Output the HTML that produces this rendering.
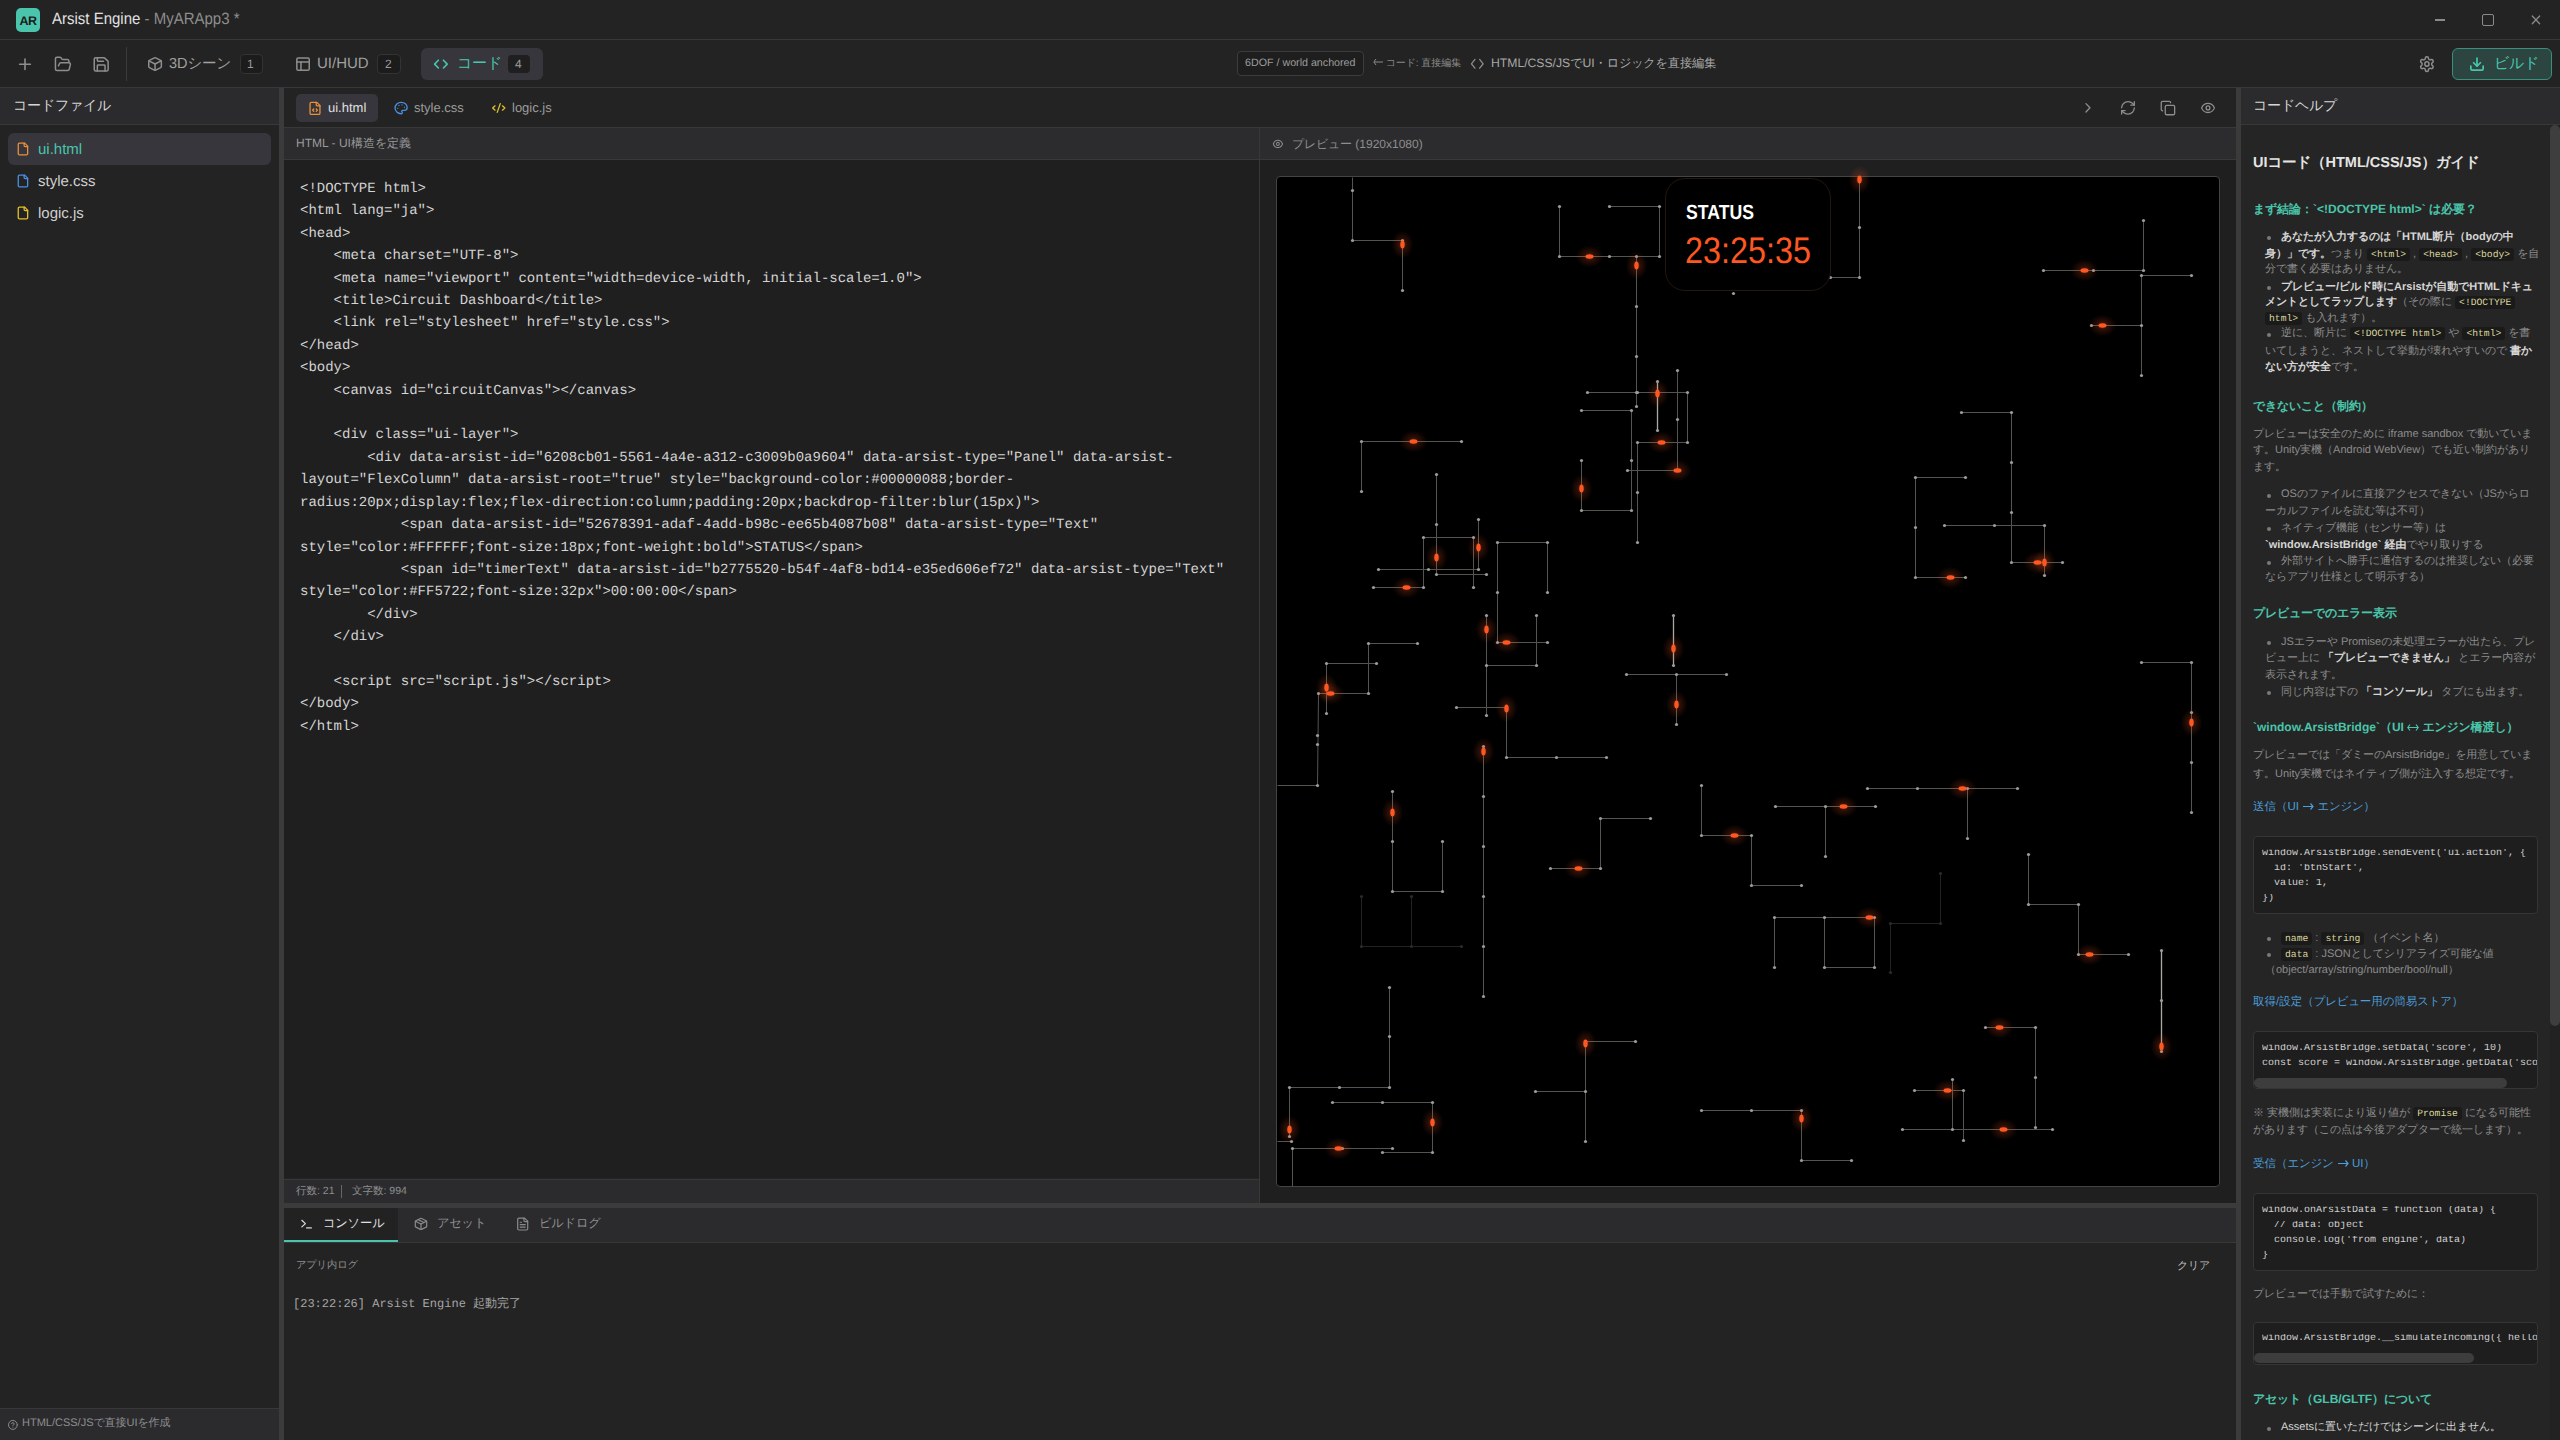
<!DOCTYPE html>
<html lang="ja">
<head>
<meta charset="UTF-8">
<style>
*{box-sizing:border-box;margin:0;padding:0}
html,body{text-rendering:geometricPrecision;width:2560px;height:1440px;overflow:hidden;background:#232323;font-family:"Liberation Sans",sans-serif;color:#ddd}
.a{position:absolute}
.t{position:absolute;white-space:pre;line-height:1}
svg{position:absolute;overflow:visible}
i{display:inline-block;width:1em;font-style:normal}
.mono{font-family:"Liberation Mono",monospace}
.ic{font-family:"Liberation Mono",monospace;font-size:9.7px;color:#d9d49c;background:#1a1a1a;border-radius:3px;padding:1px 4px}
</style>
</head>
<body>
<!-- TITLE BAR -->
<div class="a" style="left:0;top:0;width:2560px;height:39px;background:#232323"></div>
<div class="a" style="left:0;top:39px;width:2560px;height:1px;background:#383838"></div>
<div class="a" style="left:16px;top:8px;width:24px;height:24px;border-radius:5px;background:#4ac5ab"></div>
<div class="t" style="left:19.5px;top:14.5px;font-size:12.5px;font-weight:bold;color:#1b1b1b;letter-spacing:-0.5px">AR</div>
<div class="t" style="left:52px;top:11.2px;font-size:16.4px;color:#e2e2e2;transform:scaleX(.915);transform-origin:0 0">Arsist Engine<span style="color:#8d8d8d"> - MyARApp3 *</span></div>
<div class="a" style="left:2435px;top:19px;width:10px;height:2px;background:#8a8a8a"></div>
<div class="a" style="left:2482px;top:14px;width:12px;height:12px;border:1.5px solid #8a8a8a;border-radius:2px"></div>

<!-- TOOLBAR -->
<div class="a" style="left:0;top:87px;width:2560px;height:1px;background:#383838"></div>
<div class="a" style="left:126px;top:47px;width:1px;height:34px;background:#3a3a3a"></div>
<div class="t" style="left:169px;top:56.5px;font-size:14.5px;color:#a0a0a0">3D<i>シ</i><i>ー</i><i>ン</i></div>
<div class="a" style="left:240px;top:54px;width:23px;height:20px;border:1px solid #333;border-radius:4px;background:#1c1c1c"></div>
<div class="t" style="left:247px;top:58px;font-size:12px;color:#9a9a9a">1</div>
<div class="t" style="left:317px;top:56px;font-size:15px;color:#a0a0a0">UI/HUD</div>
<div class="a" style="left:377px;top:54px;width:24px;height:20px;border:1px solid #333;border-radius:4px;background:#1c1c1c"></div>
<div class="t" style="left:385px;top:58px;font-size:12px;color:#9a9a9a">2</div>
<div class="a" style="left:421px;top:48px;width:122px;height:32px;border-radius:6px;background:#37363c"></div>
<div class="t" style="left:457px;top:56px;font-size:15px;color:#4ac5ab"><i>コ</i><i>ー</i><i>ド</i></div>
<div class="a" style="left:508px;top:55px;width:22px;height:18px;border-radius:4px;background:#1f1f1f"></div>
<div class="t" style="left:515px;top:58px;font-size:12px;color:#9a9a9a">4</div>

<div class="a" style="left:1237px;top:51px;width:127px;height:25px;border:1px solid #3c3c3c;border-radius:4px;background:#1e1e1e"></div>
<div class="t" style="left:1245px;top:58px;font-size:10.7px;color:#9c9c9c">6DOF / world anchored</div>
<div class="t" style="left:1373px;top:58px;font-size:10px;color:#8a8a8a"><svg style="position:static;display:inline-block;vertical-align:0" width="10" height="8" viewBox="0 0 10 8"><path d="M3 1L.8 4 3 7M1 4h9" fill="none" stroke="#8a8a8a" stroke-width="1"/></svg> <i>コ</i><i>ー</i><i>ド</i>: <i>直</i><i>接</i><i>編</i><i>集</i></div>
<div class="t" style="left:1491px;top:57px;font-size:12.2px;color:#a8a8a8">HTML/CSS/JS<i>で</i>UI<i>・</i><i>ロ</i><i>ジ</i><i>ッ</i><i>ク</i><i>を</i><i>直</i><i>接</i><i>編</i><i>集</i></div>

<div class="a" style="left:2452px;top:48px;width:100px;height:32px;border:1px solid #3a8f7e;border-radius:6px;background:#2c4541"></div>
<div class="t" style="left:2494px;top:56px;font-size:15px;color:#4ac5ab"><i>ビ</i><i>ル</i><i>ド</i></div>

<!-- SIDEBAR -->
<div class="a" style="left:0;top:88px;width:279px;height:36px;background:#2b2b2e"></div>
<div class="a" style="left:0;top:124px;width:279px;height:1px;background:#383838"></div>
<div class="t" style="left:13px;top:97.5px;font-size:14px;color:#d6d6d6"><i>コ</i><i>ー</i><i>ド</i><i>フ</i><i>ァ</i><i>イ</i><i>ル</i></div>
<div class="a" style="left:8px;top:133px;width:263px;height:32px;border-radius:6px;background:#37363c"></div>
<div class="t" style="left:38px;top:142px;font-size:15px;color:#4ac5ab">ui.html</div>
<div class="t" style="left:38px;top:174px;font-size:15px;color:#cfcfcf">style.css</div>
<div class="t" style="left:38px;top:206px;font-size:15px;color:#cfcfcf">logic.js</div>
<div class="a" style="left:0;top:1408px;width:279px;height:1px;background:#383838"></div>
<div class="a" style="left:0;top:1409px;width:279px;height:31px;background:#2b2b2e"></div>
<div class="t" style="left:22px;top:1418px;font-size:11px;color:#8e8e8e">HTML/CSS/JS<i>で</i><i>直</i><i>接</i>UI<i>を</i><i>作</i><i>成</i></div>

<!-- SPLITTERS -->
<div class="a" style="left:279px;top:88px;width:5px;height:1352px;background:#3b3b3b"></div>
<div class="a" style="left:2236px;top:88px;width:5px;height:1352px;background:#3b3b3b"></div>
<div class="a" style="left:284px;top:1203px;width:1952px;height:5px;background:#3b3b3b"></div>

<!-- EDITOR TABS -->
<div class="a" style="left:284px;top:127px;width:1952px;height:1px;background:#383838"></div>
<div class="a" style="left:296px;top:94px;width:82px;height:28px;border-radius:5px;background:#37363c"></div>
<div class="t" style="left:328px;top:101px;font-size:13px;color:#e0e0e0">ui.html</div>
<div class="t" style="left:414px;top:101px;font-size:13px;color:#9c9c9c">style.css</div>
<div class="t" style="left:512px;top:101px;font-size:13px;color:#9c9c9c">logic.js</div>

<!-- EDITOR HEADER + CODE -->
<div class="a" style="left:284px;top:128px;width:975px;height:31px;background:#2c2c2f"></div>
<div class="a" style="left:284px;top:159px;width:975px;height:1px;background:#383838"></div>
<div class="t" style="left:296px;top:137px;font-size:12px;color:#9a9a9a">HTML - UI<i>構</i><i>造</i><i>を</i><i>定</i><i>義</i></div>
<div class="a" style="left:284px;top:160px;width:975px;height:1018px;background:#1f1f1f"></div>
<pre id="code" class="a mono" style="left:300px;top:178px;font-size:14px;line-height:22.4px;color:#d4d4d4">&lt;!DOCTYPE html&gt;
&lt;html lang="ja"&gt;
&lt;head&gt;
    &lt;meta charset="UTF-8"&gt;
    &lt;meta name="viewport" content="width=device-width, initial-scale=1.0"&gt;
    &lt;title&gt;Circuit Dashboard&lt;/title&gt;
    &lt;link rel="stylesheet" href="style.css"&gt;
&lt;/head&gt;
&lt;body&gt;
    &lt;canvas id="circuitCanvas"&gt;&lt;/canvas&gt;

    &lt;div class="ui-layer"&gt;
        &lt;div data-arsist-id="6208cb01-5561-4a4e-a312-c3009b0a9604" data-arsist-type="Panel" data-arsist-
layout="FlexColumn" data-arsist-root="true" style="background-color:#00000088;border-
radius:20px;display:flex;flex-direction:column;padding:20px;backdrop-filter:blur(15px)"&gt;
            &lt;span data-arsist-id="52678391-adaf-4add-b98c-ee65b4087b08" data-arsist-type="Text"
style="color:#FFFFFF;font-size:18px;font-weight:bold"&gt;STATUS&lt;/span&gt;
            &lt;span id="timerText" data-arsist-id="b2775520-b54f-4af8-bd14-e35ed606ef72" data-arsist-type="Text"
style="color:#FF5722;font-size:32px"&gt;00:00:00&lt;/span&gt;
        &lt;/div&gt;
    &lt;/div&gt;

    &lt;script src="script.js"&gt;&lt;/script&gt;
&lt;/body&gt;
&lt;/html&gt;</pre>
<div class="a" style="left:284px;top:1179px;width:975px;height:1px;background:#383838"></div>
<div class="a" style="left:284px;top:1180px;width:975px;height:23px;background:#2b2b2e"></div>
<div class="t" style="left:296px;top:1186px;font-size:10.5px;color:#8e8e8e"><i>行</i><i>数</i>: 21</div>
<div class="a" style="left:341px;top:1185px;width:1px;height:13px;background:#666"></div>
<div class="t" style="left:352px;top:1186px;font-size:10.5px;color:#8e8e8e"><i>文</i><i>字</i><i>数</i>: 994</div>
<div class="a" style="left:1259px;top:128px;width:1px;height:1075px;background:#383838"></div>

<!-- PREVIEW -->
<div class="a" style="left:1260px;top:128px;width:976px;height:31px;background:#2c2c2f"></div>
<div class="a" style="left:1260px;top:159px;width:976px;height:1px;background:#383838"></div>
<div class="t" style="left:1292px;top:137.7px;font-size:12px;color:#8e8e8e"><i>プ</i><i>レ</i><i>ビ</i><i>ュ</i><i>ー</i> (1920x1080)</div>
<div class="a" style="left:1260px;top:160px;width:976px;height:1043px;background:#1f1f1f"></div>
<div id="pv" class="a" style="left:1276px;top:176px;width:944px;height:1011px;border:1px solid #444;border-radius:4px;background:#000;overflow:hidden"></div>
<svg class="a" style="left:1276px;top:176px" width="944" height="1011" viewBox="0 0 944 1011">
<defs><radialGradient id="gl"><stop offset="0" stop-color="#ff5722" stop-opacity=".45"/><stop offset=".35" stop-color="#ff5722" stop-opacity=".18"/><stop offset="1" stop-color="#ff5722" stop-opacity="0"/></radialGradient></defs>
<path d="M664.5 697.5L664.5 747.5L614.5 747.5L614.5 796.5M85.5 720.5L85.5 770.5L185.5 770.5M135.5 720.5L135.5 770.5" stroke="#222220" stroke-width="1" fill="none"/>
<path d="M76.5 1.5L76.5 64.5L126.5 64.5L126.5 114.5M283.5 30.5L283.5 80.5L383.5 80.5M333.5 30.5L383.5 30.5L383.5 80.5M360.5 80.5L360.5 230.5M311.5 216.5L411.5 216.5M401.5 194.5L401.5 294.5L351.5 294.5M411.5 216.5L411.5 266.5L361.5 266.5M305.5 234.5L355.5 234.5L355.5 334.5L305.5 334.5L305.5 284.5M361.5 266.5L361.5 366.5M583.5 1.5L583.5 101.5L554.5 101.5M767.5 94.5L867.5 94.5L867.5 44.5M915.5 99.5L865.5 99.5L865.5 199.5M815.5 149.5L865.5 149.5M685.5 236.5L735.5 236.5L735.5 386.5M185.5 265.5L85.5 265.5L85.5 315.5M160.5 298.5L160.5 398.5L210.5 398.5M147.5 411.5L147.5 361.5L197.5 361.5L197.5 411.5M202.5 343.5L202.5 393.5L102.5 393.5M97.5 411.5L147.5 411.5M271.5 416.5L271.5 366.5L221.5 366.5L221.5 466.5L271.5 466.5M210.5 439.5L210.5 539.5M210.5 489.5L260.5 489.5L260.5 439.5M141.5 467.5L92.5 467.5L92.5 517.5L42.5 517.5M100.5 487.5L50.5 487.5L50.5 537.5M350.5 498.5L450.5 498.5M400.5 498.5L400.5 548.5M689.5 301.5L639.5 301.5L639.5 401.5L689.5 401.5M668.5 349.5L768.5 349.5L768.5 399.5M735.5 386.5L786.5 386.5M865.5 486.5L915.5 486.5L915.5 636.5M42.5 517.5L41.5 609.5L1.5 609.5M180.5 531.5L230.5 531.5L230.5 581.5L330.5 581.5M207.5 570.5L207.5 820.5M116.5 615.5L116.5 715.5L166.5 715.5L166.5 665.5M374.5 642.5L324.5 642.5L324.5 692.5L274.5 692.5M425.5 609.5L425.5 659.5L475.5 659.5L475.5 709.5L525.5 709.5M591.5 612.5L741.5 612.5M691.5 612.5L691.5 662.5M499.5 630.5L599.5 630.5M549.5 630.5L549.5 680.5M752.5 678.5L752.5 728.5L802.5 728.5L802.5 778.5L852.5 778.5M498.5 791.5L498.5 741.5L598.5 741.5L598.5 791.5L548.5 791.5L548.5 741.5M113.5 811.5L113.5 911.5L13.5 911.5L13.5 960.5M56.5 926.5L156.5 926.5L156.5 976.5L106.5 976.5M116.5 972.5L16.5 972.5L16.5 1010.5M1.5 965.5L15.5 965.5M359.5 865.5L309.5 865.5L309.5 965.5M259.5 915.5L309.5 915.5M425.5 934.5L525.5 934.5L525.5 984.5L575.5 984.5M709.5 851.5L759.5 851.5L759.5 951.5M626.5 953.5L776.5 953.5M676.5 903.5L676.5 953.5M638.5 914.5L687.5 914.5L687.5 964.5" stroke="#55554f" stroke-width="1" fill="none"/>
<path d="M381.5 205.5L381.5 254.5M397.5 439.5L397.5 489.5M885.5 774.5L885.5 875.5" stroke="#a8a8a4" stroke-width="1.3" fill="none"/>
<g fill="#2a2a2a"><circle cx="85.5" cy="720.5" r="1.6"/><circle cx="85.5" cy="770.5" r="1.6"/><circle cx="135.5" cy="720.5" r="1.6"/><circle cx="135.5" cy="770.5" r="1.6"/><circle cx="185.5" cy="770.5" r="1.6"/><circle cx="614.5" cy="747.5" r="1.6"/><circle cx="614.5" cy="796.5" r="1.6"/><circle cx="664.5" cy="697.5" r="1.6"/><circle cx="664.5" cy="747.5" r="1.6"/></g>
<g fill="#9c9c9c"><circle cx="13.5" cy="911.5" r="1.6"/><circle cx="13.5" cy="960.5" r="1.6"/><circle cx="15.5" cy="965.5" r="1.6"/><circle cx="16.5" cy="972.5" r="1.6"/><circle cx="41.5" cy="559.5" r="1.6"/><circle cx="41.5" cy="568.5" r="1.6"/><circle cx="41.5" cy="609.5" r="1.6"/><circle cx="42.5" cy="517.5" r="1.6"/><circle cx="50.5" cy="487.5" r="1.6"/><circle cx="50.5" cy="537.5" r="1.6"/><circle cx="56.5" cy="926.5" r="1.6"/><circle cx="63.5" cy="911.5" r="1.6"/><circle cx="66.5" cy="972.5" r="1.6"/><circle cx="76.5" cy="14.5" r="1.6"/><circle cx="76.5" cy="64.5" r="1.6"/><circle cx="85.5" cy="265.5" r="1.6"/><circle cx="85.5" cy="315.5" r="1.6"/><circle cx="92.5" cy="467.5" r="1.6"/><circle cx="92.5" cy="517.5" r="1.6"/><circle cx="97.5" cy="411.5" r="1.6"/><circle cx="100.5" cy="487.5" r="1.6"/><circle cx="102.5" cy="393.5" r="1.6"/><circle cx="106.5" cy="926.5" r="1.6"/><circle cx="106.5" cy="976.5" r="1.6"/><circle cx="113.5" cy="811.5" r="1.6"/><circle cx="113.5" cy="860.5" r="1.6"/><circle cx="113.5" cy="911.5" r="1.6"/><circle cx="116.5" cy="615.5" r="1.6"/><circle cx="116.5" cy="665.5" r="1.6"/><circle cx="116.5" cy="715.5" r="1.6"/><circle cx="116.5" cy="972.5" r="1.6"/><circle cx="126.5" cy="64.5" r="1.6"/><circle cx="126.5" cy="114.5" r="1.6"/><circle cx="141.5" cy="467.5" r="1.6"/><circle cx="147.5" cy="361.5" r="1.6"/><circle cx="147.5" cy="411.5" r="1.6"/><circle cx="152.5" cy="393.5" r="1.6"/><circle cx="156.5" cy="926.5" r="1.6"/><circle cx="156.5" cy="976.5" r="1.6"/><circle cx="160.5" cy="298.5" r="1.6"/><circle cx="160.5" cy="348.5" r="1.6"/><circle cx="160.5" cy="398.5" r="1.6"/><circle cx="166.5" cy="665.5" r="1.6"/><circle cx="166.5" cy="715.5" r="1.6"/><circle cx="180.5" cy="531.5" r="1.6"/><circle cx="185.5" cy="265.5" r="1.6"/><circle cx="197.5" cy="361.5" r="1.6"/><circle cx="197.5" cy="411.5" r="1.6"/><circle cx="202.5" cy="343.5" r="1.6"/><circle cx="202.5" cy="393.5" r="1.6"/><circle cx="207.5" cy="570.5" r="1.6"/><circle cx="207.5" cy="620.5" r="1.6"/><circle cx="207.5" cy="670.5" r="1.6"/><circle cx="207.5" cy="720.5" r="1.6"/><circle cx="207.5" cy="770.5" r="1.6"/><circle cx="207.5" cy="820.5" r="1.6"/><circle cx="210.5" cy="398.5" r="1.6"/><circle cx="210.5" cy="439.5" r="1.6"/><circle cx="210.5" cy="489.5" r="1.6"/><circle cx="210.5" cy="539.5" r="1.6"/><circle cx="221.5" cy="366.5" r="1.6"/><circle cx="221.5" cy="416.5" r="1.6"/><circle cx="221.5" cy="466.5" r="1.6"/><circle cx="230.5" cy="531.5" r="1.6"/><circle cx="230.5" cy="581.5" r="1.6"/><circle cx="259.5" cy="915.5" r="1.6"/><circle cx="260.5" cy="439.5" r="1.6"/><circle cx="260.5" cy="489.5" r="1.6"/><circle cx="271.5" cy="366.5" r="1.6"/><circle cx="271.5" cy="416.5" r="1.6"/><circle cx="271.5" cy="466.5" r="1.6"/><circle cx="274.5" cy="692.5" r="1.6"/><circle cx="280.5" cy="581.5" r="1.6"/><circle cx="283.5" cy="30.5" r="1.6"/><circle cx="283.5" cy="80.5" r="1.6"/><circle cx="305.5" cy="234.5" r="1.6"/><circle cx="305.5" cy="284.5" r="1.6"/><circle cx="305.5" cy="334.5" r="1.6"/><circle cx="309.5" cy="865.5" r="1.6"/><circle cx="309.5" cy="915.5" r="1.6"/><circle cx="309.5" cy="965.5" r="1.6"/><circle cx="311.5" cy="216.5" r="1.6"/><circle cx="324.5" cy="642.5" r="1.6"/><circle cx="324.5" cy="692.5" r="1.6"/><circle cx="330.5" cy="581.5" r="1.6"/><circle cx="333.5" cy="30.5" r="1.6"/><circle cx="333.5" cy="80.5" r="1.6"/><circle cx="350.5" cy="498.5" r="1.6"/><circle cx="351.5" cy="294.5" r="1.6"/><circle cx="355.5" cy="234.5" r="1.6"/><circle cx="355.5" cy="284.5" r="1.6"/><circle cx="355.5" cy="334.5" r="1.6"/><circle cx="359.5" cy="865.5" r="1.6"/><circle cx="360.5" cy="80.5" r="1.6"/><circle cx="360.5" cy="130.5" r="1.6"/><circle cx="360.5" cy="180.5" r="1.6"/><circle cx="360.5" cy="216.5" r="1.6"/><circle cx="360.5" cy="230.5" r="1.6"/><circle cx="361.5" cy="216.5" r="1.6"/><circle cx="361.5" cy="266.5" r="1.6"/><circle cx="361.5" cy="316.5" r="1.6"/><circle cx="361.5" cy="366.5" r="1.6"/><circle cx="374.5" cy="642.5" r="1.6"/><circle cx="381.5" cy="205.5" r="1.6"/><circle cx="381.5" cy="254.5" r="1.6"/><circle cx="383.5" cy="30.5" r="1.6"/><circle cx="383.5" cy="80.5" r="1.6"/><circle cx="397.5" cy="439.5" r="1.6"/><circle cx="397.5" cy="489.5" r="1.6"/><circle cx="400.5" cy="498.5" r="1.6"/><circle cx="400.5" cy="548.5" r="1.6"/><circle cx="401.5" cy="194.5" r="1.6"/><circle cx="401.5" cy="243.5" r="1.6"/><circle cx="401.5" cy="294.5" r="1.6"/><circle cx="411.5" cy="216.5" r="1.6"/><circle cx="411.5" cy="266.5" r="1.6"/><circle cx="425.5" cy="609.5" r="1.6"/><circle cx="425.5" cy="659.5" r="1.6"/><circle cx="425.5" cy="934.5" r="1.6"/><circle cx="450.5" cy="498.5" r="1.6"/><circle cx="457.5" cy="117.5" r="1.6"/><circle cx="475.5" cy="659.5" r="1.6"/><circle cx="475.5" cy="709.5" r="1.6"/><circle cx="475.5" cy="934.5" r="1.6"/><circle cx="498.5" cy="741.5" r="1.6"/><circle cx="498.5" cy="791.5" r="1.6"/><circle cx="499.5" cy="630.5" r="1.6"/><circle cx="525.5" cy="709.5" r="1.6"/><circle cx="525.5" cy="934.5" r="1.6"/><circle cx="525.5" cy="984.5" r="1.6"/><circle cx="548.5" cy="741.5" r="1.6"/><circle cx="548.5" cy="791.5" r="1.6"/><circle cx="549.5" cy="630.5" r="1.6"/><circle cx="549.5" cy="680.5" r="1.6"/><circle cx="554.5" cy="101.5" r="1.6"/><circle cx="575.5" cy="984.5" r="1.6"/><circle cx="583.5" cy="51.5" r="1.6"/><circle cx="583.5" cy="101.5" r="1.6"/><circle cx="591.5" cy="612.5" r="1.6"/><circle cx="598.5" cy="741.5" r="1.6"/><circle cx="598.5" cy="791.5" r="1.6"/><circle cx="599.5" cy="630.5" r="1.6"/><circle cx="626.5" cy="953.5" r="1.6"/><circle cx="638.5" cy="914.5" r="1.6"/><circle cx="639.5" cy="301.5" r="1.6"/><circle cx="639.5" cy="351.5" r="1.6"/><circle cx="639.5" cy="401.5" r="1.6"/><circle cx="641.5" cy="612.5" r="1.6"/><circle cx="668.5" cy="349.5" r="1.6"/><circle cx="676.5" cy="903.5" r="1.6"/><circle cx="676.5" cy="953.5" r="1.6"/><circle cx="685.5" cy="236.5" r="1.6"/><circle cx="687.5" cy="914.5" r="1.6"/><circle cx="687.5" cy="964.5" r="1.6"/><circle cx="689.5" cy="301.5" r="1.6"/><circle cx="689.5" cy="401.5" r="1.6"/><circle cx="691.5" cy="612.5" r="1.6"/><circle cx="691.5" cy="662.5" r="1.6"/><circle cx="709.5" cy="851.5" r="1.6"/><circle cx="718.5" cy="349.5" r="1.6"/><circle cx="735.5" cy="236.5" r="1.6"/><circle cx="735.5" cy="286.5" r="1.6"/><circle cx="735.5" cy="336.5" r="1.6"/><circle cx="735.5" cy="386.5" r="1.6"/><circle cx="741.5" cy="612.5" r="1.6"/><circle cx="752.5" cy="678.5" r="1.6"/><circle cx="752.5" cy="728.5" r="1.6"/><circle cx="759.5" cy="851.5" r="1.6"/><circle cx="759.5" cy="901.5" r="1.6"/><circle cx="759.5" cy="951.5" r="1.6"/><circle cx="767.5" cy="94.5" r="1.6"/><circle cx="768.5" cy="349.5" r="1.6"/><circle cx="768.5" cy="399.5" r="1.6"/><circle cx="776.5" cy="953.5" r="1.6"/><circle cx="786.5" cy="386.5" r="1.6"/><circle cx="802.5" cy="728.5" r="1.6"/><circle cx="802.5" cy="778.5" r="1.6"/><circle cx="815.5" cy="149.5" r="1.6"/><circle cx="817.5" cy="94.5" r="1.6"/><circle cx="852.5" cy="778.5" r="1.6"/><circle cx="865.5" cy="99.5" r="1.6"/><circle cx="865.5" cy="149.5" r="1.6"/><circle cx="865.5" cy="199.5" r="1.6"/><circle cx="865.5" cy="486.5" r="1.6"/><circle cx="867.5" cy="44.5" r="1.6"/><circle cx="867.5" cy="94.5" r="1.6"/><circle cx="885.5" cy="774.5" r="1.6"/><circle cx="885.5" cy="824.5" r="1.6"/><circle cx="885.5" cy="875.5" r="1.6"/><circle cx="915.5" cy="99.5" r="1.6"/><circle cx="915.5" cy="486.5" r="1.6"/><circle cx="915.5" cy="536.5" r="1.6"/><circle cx="915.5" cy="586.5" r="1.6"/><circle cx="915.5" cy="636.5" r="1.6"/></g>
<ellipse cx="126.5" cy="68.5" rx="11" ry="14" fill="url(#gl)"/><ellipse cx="126.5" cy="68.5" rx="2.2" ry="4" fill="#ff5722"/><ellipse cx="313.5" cy="80.5" rx="14" ry="11" fill="url(#gl)"/><ellipse cx="313.5" cy="80.5" rx="4" ry="2.2" fill="#ff5722"/><ellipse cx="360.5" cy="89.5" rx="11" ry="14" fill="url(#gl)"/><ellipse cx="360.5" cy="89.5" rx="2.2" ry="4" fill="#ff5722"/><ellipse cx="381.5" cy="217.5" rx="11" ry="14" fill="url(#gl)"/><ellipse cx="381.5" cy="217.5" rx="2.2" ry="4" fill="#ff5722"/><ellipse cx="401.5" cy="294.5" rx="14" ry="11" fill="url(#gl)"/><ellipse cx="401.5" cy="294.5" rx="4" ry="2.2" fill="#ff5722"/><ellipse cx="385.5" cy="266.5" rx="14" ry="11" fill="url(#gl)"/><ellipse cx="385.5" cy="266.5" rx="4" ry="2.2" fill="#ff5722"/><ellipse cx="305.5" cy="312.5" rx="11" ry="14" fill="url(#gl)"/><ellipse cx="305.5" cy="312.5" rx="2.2" ry="4" fill="#ff5722"/><ellipse cx="583.5" cy="3.5" rx="11" ry="14" fill="url(#gl)"/><ellipse cx="583.5" cy="3.5" rx="2.2" ry="4" fill="#ff5722"/><ellipse cx="808.5" cy="94.5" rx="14" ry="11" fill="url(#gl)"/><ellipse cx="808.5" cy="94.5" rx="4" ry="2.2" fill="#ff5722"/><ellipse cx="826.5" cy="149.5" rx="14" ry="11" fill="url(#gl)"/><ellipse cx="826.5" cy="149.5" rx="4" ry="2.2" fill="#ff5722"/><ellipse cx="137.5" cy="265.5" rx="14" ry="11" fill="url(#gl)"/><ellipse cx="137.5" cy="265.5" rx="4" ry="2.2" fill="#ff5722"/><ellipse cx="160.5" cy="381.5" rx="11" ry="14" fill="url(#gl)"/><ellipse cx="160.5" cy="381.5" rx="2.2" ry="4" fill="#ff5722"/><ellipse cx="202.5" cy="371.5" rx="11" ry="14" fill="url(#gl)"/><ellipse cx="202.5" cy="371.5" rx="2.2" ry="4" fill="#ff5722"/><ellipse cx="130.5" cy="411.5" rx="14" ry="11" fill="url(#gl)"/><ellipse cx="130.5" cy="411.5" rx="4" ry="2.2" fill="#ff5722"/><ellipse cx="230.5" cy="466.5" rx="14" ry="11" fill="url(#gl)"/><ellipse cx="230.5" cy="466.5" rx="4" ry="2.2" fill="#ff5722"/><ellipse cx="210.5" cy="453.5" rx="11" ry="14" fill="url(#gl)"/><ellipse cx="210.5" cy="453.5" rx="2.2" ry="4" fill="#ff5722"/><ellipse cx="54.5" cy="517.5" rx="14" ry="11" fill="url(#gl)"/><ellipse cx="54.5" cy="517.5" rx="4" ry="2.2" fill="#ff5722"/><ellipse cx="50.5" cy="511.5" rx="11" ry="14" fill="url(#gl)"/><ellipse cx="50.5" cy="511.5" rx="2.2" ry="4" fill="#ff5722"/><ellipse cx="397.5" cy="472.5" rx="11" ry="14" fill="url(#gl)"/><ellipse cx="397.5" cy="472.5" rx="2.2" ry="4" fill="#ff5722"/><ellipse cx="400.5" cy="528.5" rx="11" ry="14" fill="url(#gl)"/><ellipse cx="400.5" cy="528.5" rx="2.2" ry="4" fill="#ff5722"/><ellipse cx="674.5" cy="401.5" rx="14" ry="11" fill="url(#gl)"/><ellipse cx="674.5" cy="401.5" rx="4" ry="2.2" fill="#ff5722"/><ellipse cx="768.5" cy="386.5" rx="11" ry="14" fill="url(#gl)"/><ellipse cx="768.5" cy="386.5" rx="2.2" ry="4" fill="#ff5722"/><ellipse cx="761.5" cy="386.5" rx="14" ry="11" fill="url(#gl)"/><ellipse cx="761.5" cy="386.5" rx="4" ry="2.2" fill="#ff5722"/><ellipse cx="915.5" cy="546.5" rx="11" ry="14" fill="url(#gl)"/><ellipse cx="915.5" cy="546.5" rx="2.2" ry="4" fill="#ff5722"/><ellipse cx="230.5" cy="532.5" rx="11" ry="14" fill="url(#gl)"/><ellipse cx="230.5" cy="532.5" rx="2.2" ry="4" fill="#ff5722"/><ellipse cx="207.5" cy="575.5" rx="11" ry="14" fill="url(#gl)"/><ellipse cx="207.5" cy="575.5" rx="2.2" ry="4" fill="#ff5722"/><ellipse cx="116.5" cy="636.5" rx="11" ry="14" fill="url(#gl)"/><ellipse cx="116.5" cy="636.5" rx="2.2" ry="4" fill="#ff5722"/><ellipse cx="302.5" cy="692.5" rx="14" ry="11" fill="url(#gl)"/><ellipse cx="302.5" cy="692.5" rx="4" ry="2.2" fill="#ff5722"/><ellipse cx="458.5" cy="659.5" rx="14" ry="11" fill="url(#gl)"/><ellipse cx="458.5" cy="659.5" rx="4" ry="2.2" fill="#ff5722"/><ellipse cx="686.5" cy="612.5" rx="14" ry="11" fill="url(#gl)"/><ellipse cx="686.5" cy="612.5" rx="4" ry="2.2" fill="#ff5722"/><ellipse cx="567.5" cy="630.5" rx="14" ry="11" fill="url(#gl)"/><ellipse cx="567.5" cy="630.5" rx="4" ry="2.2" fill="#ff5722"/><ellipse cx="813.5" cy="778.5" rx="14" ry="11" fill="url(#gl)"/><ellipse cx="813.5" cy="778.5" rx="4" ry="2.2" fill="#ff5722"/><ellipse cx="593.5" cy="741.5" rx="14" ry="11" fill="url(#gl)"/><ellipse cx="593.5" cy="741.5" rx="4" ry="2.2" fill="#ff5722"/><ellipse cx="13.5" cy="953.5" rx="11" ry="14" fill="url(#gl)"/><ellipse cx="13.5" cy="953.5" rx="2.2" ry="4" fill="#ff5722"/><ellipse cx="156.5" cy="946.5" rx="11" ry="14" fill="url(#gl)"/><ellipse cx="156.5" cy="946.5" rx="2.2" ry="4" fill="#ff5722"/><ellipse cx="62.5" cy="972.5" rx="14" ry="11" fill="url(#gl)"/><ellipse cx="62.5" cy="972.5" rx="4" ry="2.2" fill="#ff5722"/><ellipse cx="309.5" cy="867.5" rx="11" ry="14" fill="url(#gl)"/><ellipse cx="309.5" cy="867.5" rx="2.2" ry="4" fill="#ff5722"/><ellipse cx="525.5" cy="942.5" rx="11" ry="14" fill="url(#gl)"/><ellipse cx="525.5" cy="942.5" rx="2.2" ry="4" fill="#ff5722"/><ellipse cx="885.5" cy="870.5" rx="11" ry="14" fill="url(#gl)"/><ellipse cx="885.5" cy="870.5" rx="2.2" ry="4" fill="#ff5722"/><ellipse cx="723.5" cy="851.5" rx="14" ry="11" fill="url(#gl)"/><ellipse cx="723.5" cy="851.5" rx="4" ry="2.2" fill="#ff5722"/><ellipse cx="727.5" cy="953.5" rx="14" ry="11" fill="url(#gl)"/><ellipse cx="727.5" cy="953.5" rx="4" ry="2.2" fill="#ff5722"/><ellipse cx="671.5" cy="914.5" rx="14" ry="11" fill="url(#gl)"/><ellipse cx="671.5" cy="914.5" rx="4" ry="2.2" fill="#ff5722"/>
</svg>
<div class="a" style="left:1665px;top:178px;width:166px;height:113px;border-radius:20px;background:rgba(0,0,0,.53);border:1px solid #24170f"></div>
<div class="t" style="left:1686px;top:203px;font-size:20.5px;font-weight:bold;color:#fff;transform:scaleX(.86);transform-origin:0 0">STATUS</div>
<div class="t" style="left:1685px;top:231.8px;font-size:37px;color:#ff5722;transform:scaleX(.875);transform-origin:0 0">23:25:35</div>


<!-- RIGHT PANEL -->
<div class="a" style="left:2241px;top:88px;width:319px;height:36px;background:#2b2b2e"></div>
<div class="a" style="left:2241px;top:124px;width:319px;height:1px;background:#383838"></div>
<div class="t" style="left:2253px;top:97.5px;font-size:14px;color:#d6d6d6"><i>コ</i><i>ー</i><i>ド</i><i>ヘ</i><i>ル</i><i>プ</i></div>
<div class="a" style="left:2241px;top:125px;width:319px;height:1315px;background:#252525"></div>
<div class="a" style="left:2550px;top:125px;width:10px;height:1315px;background:#222"></div>
<div class="a" style="left:2550px;top:125px;width:10px;height:901px;border-radius:5px;background:#3e3e3e"></div>
<div class="t" style="left:2253px;top:156.0px;font-size:14.5px;color:#e4e4e4;font-weight:bold;">UI<i>コ</i><i>ー</i><i>ド</i><i>（</i>HTML/CSS/JS<i>）</i><i>ガ</i><i>イ</i><i>ド</i></div>
<div class="t" style="left:2253px;top:202.8px;font-size:12px;color:#4ac5ab;font-weight:bold;"><i>ま</i><i>ず</i><i>結</i><i>論</i><i>：</i>`&lt;!DOCTYPE html&gt;` <i>は</i><i>必</i><i>要</i><i>？</i></div>
<div class="a" style="left:2267px;top:236.0px;width:4px;height:4px;border-radius:2px;background:#7a7a7a"></div>
<div class="t hp" style="left:2281px;top:231.7px;font-size:11px"><span style="color:#d6d6d6;font-weight:bold"><i>あ</i><i>な</i><i>た</i><i>が</i><i>入</i><i>力</i><i>す</i><i>る</i><i>の</i><i>は</i><i>「</i>HTML<i>断</i><i>片</i><i>（</i>body<i>の</i><i>中</i></span></div>
<div class="t hp" style="left:2265px;top:249.0px;font-size:11px"><span style="color:#d6d6d6;font-weight:bold"><i>身</i><i>）</i><i>」</i><i>で</i><i>す</i><i>。</i></span><span style="color:#8c8c8c"><i>つ</i><i>ま</i><i>り</i> </span><span class="ic">&lt;html&gt;</span><span style="color:#8c8c8c"> , </span><span class="ic">&lt;head&gt;</span><span style="color:#8c8c8c"> , </span><span class="ic">&lt;body&gt;</span><span style="color:#8c8c8c"> <i>を</i><i>自</i></span></div>
<div class="t hp" style="left:2265px;top:264.3px;font-size:11px"><span style="color:#8c8c8c"><i>分</i><i>で</i><i>書</i><i>く</i><i>必</i><i>要</i><i>は</i><i>あ</i><i>り</i><i>ま</i><i>せ</i><i>ん</i><i>。</i></span></div>
<div class="a" style="left:2267px;top:285.8px;width:4px;height:4px;border-radius:2px;background:#7a7a7a"></div>
<div class="t hp" style="left:2281px;top:281.5px;font-size:11px"><span style="color:#d6d6d6;font-weight:bold"><i>プ</i><i>レ</i><i>ビ</i><i>ュ</i><i>ー</i>/<i>ビ</i><i>ル</i><i>ド</i><i>時</i><i>に</i>Arsist<i>が</i><i>自</i><i>動</i><i>で</i>HTML<i>ド</i><i>キ</i><i>ュ</i></span></div>
<div class="t hp" style="left:2265px;top:296.7px;font-size:11px"><span style="color:#d6d6d6;font-weight:bold"><i>メ</i><i>ン</i><i>ト</i><i>と</i><i>し</i><i>て</i><i>ラ</i><i>ッ</i><i>プ</i><i>し</i><i>ま</i><i>す</i></span><span style="color:#8c8c8c"><i>（</i><i>そ</i><i>の</i><i>際</i><i>に</i> </span><span class="ic">&lt;!DOCTYPE</span></div>
<div class="t hp" style="left:2265px;top:313.1px;font-size:11px"><span class="ic">html&gt;</span><span style="color:#8c8c8c"> <i>も</i><i>入</i><i>れ</i><i>ま</i><i>す</i><i>）</i><i>。</i></span></div>
<div class="a" style="left:2267px;top:332.7px;width:4px;height:4px;border-radius:2px;background:#7a7a7a"></div>
<div class="t hp" style="left:2281px;top:328.4px;font-size:11px"><span style="color:#8c8c8c"><i>逆</i><i>に</i><i>、</i><i>断</i><i>片</i><i>に</i> </span><span class="ic">&lt;!DOCTYPE html&gt;</span><span style="color:#8c8c8c"> <i>や</i> </span><span class="ic">&lt;html&gt;</span><span style="color:#8c8c8c"> <i>を</i><i>書</i></span></div>
<div class="t hp" style="left:2265px;top:345.6px;font-size:11px"><span style="color:#8c8c8c"><i>い</i><i>て</i><i>し</i><i>ま</i><i>う</i><i>と</i><i>、</i><i>ネ</i><i>ス</i><i>ト</i><i>し</i><i>て</i><i>挙</i><i>動</i><i>が</i><i>壊</i><i>れ</i><i>や</i><i>す</i><i>い</i><i>の</i><i>で</i> </span><span style="color:#d6d6d6;font-weight:bold"><i>書</i><i>か</i></span></div>
<div class="t hp" style="left:2265px;top:361.7px;font-size:11px"><span style="color:#d6d6d6;font-weight:bold"><i>な</i><i>い</i><i>方</i><i>が</i><i>安</i><i>全</i></span><span style="color:#8c8c8c"><i>で</i><i>す</i><i>。</i></span></div>
<div class="t" style="left:2253px;top:399.8px;font-size:12px;color:#4ac5ab;font-weight:bold;"><i>で</i><i>き</i><i>な</i><i>い</i><i>こ</i><i>と</i><i>（</i><i>制</i><i>約</i><i>）</i></div>
<div class="t hp" style="left:2253px;top:428.6px;font-size:11px"><span style="color:#8c8c8c"><i>プ</i><i>レ</i><i>ビ</i><i>ュ</i><i>ー</i><i>は</i><i>安</i><i>全</i><i>の</i><i>た</i><i>め</i><i>に</i> iframe sandbox <i>で</i><i>動</i><i>い</i><i>て</i><i>い</i><i>ま</i></span></div>
<div class="t hp" style="left:2253px;top:445.4px;font-size:11px"><span style="color:#8c8c8c"><i>す</i><i>。</i>Unity<i>実</i><i>機</i><i>（</i>Android WebView<i>）</i><i>で</i><i>も</i><i>近</i><i>い</i><i>制</i><i>約</i><i>が</i><i>あ</i><i>り</i></span></div>
<div class="t hp" style="left:2253px;top:462.0px;font-size:11px"><span style="color:#8c8c8c"><i>ま</i><i>す</i><i>。</i></span></div>
<div class="a" style="left:2267px;top:493.6px;width:4px;height:4px;border-radius:2px;background:#7a7a7a"></div>
<div class="t hp" style="left:2281px;top:489.3px;font-size:11px"><span style="color:#8c8c8c">OS<i>の</i><i>フ</i><i>ァ</i><i>イ</i><i>ル</i><i>に</i><i>直</i><i>接</i><i>ア</i><i>ク</i><i>セ</i><i>ス</i><i>で</i><i>き</i><i>な</i><i>い</i><i>（</i>JS<i>か</i><i>ら</i><i>ロ</i></span></div>
<div class="t hp" style="left:2265px;top:506.1px;font-size:11px"><span style="color:#8c8c8c"><i>ー</i><i>カ</i><i>ル</i><i>フ</i><i>ァ</i><i>イ</i><i>ル</i><i>を</i><i>読</i><i>む</i><i>等</i><i>は</i><i>不</i><i>可</i><i>）</i></span></div>
<div class="a" style="left:2267px;top:527.0px;width:4px;height:4px;border-radius:2px;background:#7a7a7a"></div>
<div class="t hp" style="left:2281px;top:522.7px;font-size:11px"><span style="color:#8c8c8c"><i>ネ</i><i>イ</i><i>テ</i><i>ィ</i><i>ブ</i><i>機</i><i>能</i><i>（</i><i>セ</i><i>ン</i><i>サ</i><i>ー</i><i>等</i><i>）</i><i>は</i></span></div>
<div class="t hp" style="left:2265px;top:539.7px;font-size:11px"><span style="color:#d6d6d6;font-weight:bold">`window.ArsistBridge` <i>経</i><i>由</i></span><span style="color:#8c8c8c"><i>で</i><i>や</i><i>り</i><i>取</i><i>り</i><i>す</i><i>る</i></span></div>
<div class="a" style="left:2267px;top:560.5px;width:4px;height:4px;border-radius:2px;background:#7a7a7a"></div>
<div class="t hp" style="left:2281px;top:556.2px;font-size:11px"><span style="color:#8c8c8c"><i>外</i><i>部</i><i>サ</i><i>イ</i><i>ト</i><i>へ</i><i>勝</i><i>手</i><i>に</i><i>通</i><i>信</i><i>す</i><i>る</i><i>の</i><i>は</i><i>推</i><i>奨</i><i>し</i><i>な</i><i>い</i><i>（</i><i>必</i><i>要</i></span></div>
<div class="t hp" style="left:2265px;top:572.4px;font-size:11px"><span style="color:#8c8c8c"><i>な</i><i>ら</i><i>ア</i><i>プ</i><i>リ</i><i>仕</i><i>様</i><i>と</i><i>し</i><i>て</i><i>明</i><i>示</i><i>す</i><i>る</i><i>）</i></span></div>
<div class="t" style="left:2253px;top:607.4px;font-size:12px;color:#4ac5ab;font-weight:bold;"><i>プ</i><i>レ</i><i>ビ</i><i>ュ</i><i>ー</i><i>で</i><i>の</i><i>エ</i><i>ラ</i><i>ー</i><i>表</i><i>示</i></div>
<div class="a" style="left:2267px;top:640.8px;width:4px;height:4px;border-radius:2px;background:#7a7a7a"></div>
<div class="t hp" style="left:2281px;top:636.5px;font-size:11px"><span style="color:#8c8c8c">JS<i>エ</i><i>ラ</i><i>ー</i><i>や</i> Promise<i>の</i><i>未</i><i>処</i><i>理</i><i>エ</i><i>ラ</i><i>ー</i><i>が</i><i>出</i><i>た</i><i>ら</i><i>、</i><i>プ</i><i>レ</i></span></div>
<div class="t hp" style="left:2265px;top:653.3px;font-size:11px"><span style="color:#8c8c8c"><i>ビ</i><i>ュ</i><i>ー</i><i>上</i><i>に</i> </span><span style="color:#d6d6d6;font-weight:bold"><i>「</i><i>プ</i><i>レ</i><i>ビ</i><i>ュ</i><i>ー</i><i>で</i><i>き</i><i>ま</i><i>せ</i><i>ん</i><i>」</i></span><span style="color:#8c8c8c"> <i>と</i><i>エ</i><i>ラ</i><i>ー</i><i>内</i><i>容</i><i>が</i></span></div>
<div class="t hp" style="left:2265px;top:670.1px;font-size:11px"><span style="color:#8c8c8c"><i>表</i><i>示</i><i>さ</i><i>れ</i><i>ま</i><i>す</i><i>。</i></span></div>
<div class="a" style="left:2267px;top:691.0px;width:4px;height:4px;border-radius:2px;background:#7a7a7a"></div>
<div class="t hp" style="left:2281px;top:686.7px;font-size:11px"><span style="color:#8c8c8c"><i>同</i><i>じ</i><i>内</i><i>容</i><i>は</i><i>下</i><i>の</i> </span><span style="color:#d6d6d6;font-weight:bold"><i>「</i><i>コ</i><i>ン</i><i>ソ</i><i>ー</i><i>ル</i><i>」</i></span><span style="color:#8c8c8c"> <i>タ</i><i>ブ</i><i>に</i><i>も</i><i>出</i><i>ま</i><i>す</i><i>。</i></span></div>
<div class="t" style="left:2253px;top:721.2px;font-size:12px;color:#4ac5ab;font-weight:bold;">`window.ArsistBridge`<i>（</i>UI <svg style="position:static;display:inline-block;vertical-align:-1px" width="12" height="9" viewBox="0 0 12 9"><path d="M3 1.5L.8 4.5 3 7.5M9 1.5l2.2 3-2.2 3M1 4.5h10" fill="none" stroke="#4ac5ab" stroke-width="1.2"/></svg> <i>エ</i><i>ン</i><i>ジ</i><i>ン</i><i>橋</i><i>渡</i><i>し</i><i>）</i></div>
<div class="t hp" style="left:2253px;top:750.3px;font-size:11px"><span style="color:#8c8c8c"><i>プ</i><i>レ</i><i>ビ</i><i>ュ</i><i>ー</i><i>で</i><i>は</i><i>「</i><i>ダ</i><i>ミ</i><i>ー</i><i>の</i>ArsistBridge<i>」</i><i>を</i><i>用</i><i>意</i><i>し</i><i>て</i><i>い</i><i>ま</i></span></div>
<div class="t hp" style="left:2253px;top:768.7px;font-size:11px"><span style="color:#8c8c8c"><i>す</i><i>。</i>Unity<i>実</i><i>機</i><i>で</i><i>は</i><i>ネ</i><i>イ</i><i>テ</i><i>ィ</i><i>ブ</i><i>側</i><i>が</i><i>注</i><i>入</i><i>す</i><i>る</i><i>想</i><i>定</i><i>で</i><i>す</i><i>。</i></span></div>
<div class="t" style="left:2253px;top:801.8px;font-size:11.5px;color:#4b9fdc;"><i>送</i><i>信</i><i>（</i>UI <svg style="position:static;display:inline-block;vertical-align:-1px" width="12" height="9" viewBox="0 0 12 9"><path d="M8.5 1.5l2.5 3-2.5 3M1 4.5h10" fill="none" stroke="#4b9fdc" stroke-width="1.2"/></svg> <i>エ</i><i>ン</i><i>ジ</i><i>ン</i><i>）</i></div>
<div class="a" style="left:2253px;top:836px;width:285px;height:78px;border:1px solid #353535;border-radius:4px;background:#1e1e1e;overflow:hidden"></div>
<div class="t mono" style="left:2262px;top:849.0px;font-size:10px;color:#d0d0d0;max-width:275px;overflow:hidden">window.ArsistBridge.sendEvent('ui.action', {</div>
<div class="t mono" style="left:2262px;top:864.0px;font-size:10px;color:#d0d0d0;max-width:275px;overflow:hidden">  id: 'btnStart',</div>
<div class="t mono" style="left:2262px;top:879.0px;font-size:10px;color:#d0d0d0;max-width:275px;overflow:hidden">  value: 1,</div>
<div class="t mono" style="left:2262px;top:894.0px;font-size:10px;color:#d0d0d0;max-width:275px;overflow:hidden">})</div>
<div class="a" style="left:2267px;top:937.0px;width:4px;height:4px;border-radius:2px;background:#7a7a7a"></div>
<div class="t hp" style="left:2281px;top:932.7px;font-size:11px"><span class="ic">name</span><span style="color:#8c8c8c"> : </span><span class="ic">string</span><span style="color:#8c8c8c"> <i>（</i><i>イ</i><i>ベ</i><i>ン</i><i>ト</i><i>名</i><i>）</i></span></div>
<div class="a" style="left:2267px;top:953.0px;width:4px;height:4px;border-radius:2px;background:#7a7a7a"></div>
<div class="t hp" style="left:2281px;top:948.7px;font-size:11px"><span class="ic">data</span><span style="color:#8c8c8c"> : JSON<i>と</i><i>し</i><i>て</i><i>シ</i><i>リ</i><i>ア</i><i>ラ</i><i>イ</i><i>ズ</i><i>可</i><i>能</i><i>な</i><i>値</i></span></div>
<div class="t hp" style="left:2265px;top:965.0px;font-size:11px"><span style="color:#8c8c8c"><i>（</i>object/array/string/number/bool/null<i>）</i></span></div>
<div class="t" style="left:2253px;top:996.6px;font-size:11.5px;color:#4b9fdc;"><i>取</i><i>得</i>/<i>設</i><i>定</i><i>（</i><i>プ</i><i>レ</i><i>ビ</i><i>ュ</i><i>ー</i><i>用</i><i>の</i><i>簡</i><i>易</i><i>ス</i><i>ト</i><i>ア</i><i>）</i></div>
<div class="a" style="left:2253px;top:1031px;width:285px;height:58px;border:1px solid #353535;border-radius:4px;background:#1e1e1e;overflow:hidden"></div>
<div class="t mono" style="left:2262px;top:1043.7px;font-size:10px;color:#d0d0d0;max-width:275px;overflow:hidden">window.ArsistBridge.setData('score', 10)</div>
<div class="t mono" style="left:2262px;top:1059.0px;font-size:10px;color:#d0d0d0;max-width:275px;overflow:hidden">const score = window.ArsistBridge.getData('score')</div>
<div class="a" style="left:2254px;top:1078px;width:253px;height:10px;border-radius:5px;background:#3d3d3d"></div>
<div class="t hp" style="left:2253px;top:1107.7px;font-size:11px"><span style="color:#8c8c8c"><i>※</i> <i>実</i><i>機</i><i>側</i><i>は</i><i>実</i><i>装</i><i>に</i><i>よ</i><i>り</i><i>返</i><i>り</i><i>値</i><i>が</i> </span><span class="ic">Promise</span><span style="color:#8c8c8c"> <i>に</i><i>な</i><i>る</i><i>可</i><i>能</i><i>性</i></span></div>
<div class="t hp" style="left:2253px;top:1125.3px;font-size:11px"><span style="color:#8c8c8c"><i>が</i><i>あ</i><i>り</i><i>ま</i><i>す</i><i>（</i><i>こ</i><i>の</i><i>点</i><i>は</i><i>今</i><i>後</i><i>ア</i><i>ダ</i><i>プ</i><i>タ</i><i>ー</i><i>で</i><i>統</i><i>一</i><i>し</i><i>ま</i><i>す</i><i>）</i><i>。</i></span></div>
<div class="t" style="left:2253px;top:1158.5px;font-size:11.5px;color:#4b9fdc;"><i>受</i><i>信</i><i>（</i><i>エ</i><i>ン</i><i>ジ</i><i>ン</i> <svg style="position:static;display:inline-block;vertical-align:-1px" width="12" height="9" viewBox="0 0 12 9"><path d="M8.5 1.5l2.5 3-2.5 3M1 4.5h10" fill="none" stroke="#4b9fdc" stroke-width="1.2"/></svg> UI<i>）</i></div>
<div class="a" style="left:2253px;top:1193px;width:285px;height:78px;border:1px solid #353535;border-radius:4px;background:#1e1e1e;overflow:hidden"></div>
<div class="t mono" style="left:2262px;top:1205.6px;font-size:10px;color:#d0d0d0;max-width:275px;overflow:hidden">window.onArsistData = function (data) {</div>
<div class="t mono" style="left:2262px;top:1220.7px;font-size:10px;color:#d0d0d0;max-width:275px;overflow:hidden">  // data: object</div>
<div class="t mono" style="left:2262px;top:1235.7px;font-size:10px;color:#d0d0d0;max-width:275px;overflow:hidden">  console.log('from engine', data)</div>
<div class="t mono" style="left:2262px;top:1250.7px;font-size:10px;color:#d0d0d0;max-width:275px;overflow:hidden">}</div>
<div class="t hp" style="left:2253px;top:1288.7px;font-size:11px"><span style="color:#8c8c8c"><i>プ</i><i>レ</i><i>ビ</i><i>ュ</i><i>ー</i><i>で</i><i>は</i><i>手</i><i>動</i><i>で</i><i>試</i><i>す</i><i>た</i><i>め</i><i>に</i><i>：</i></span></div>
<div class="a" style="left:2253px;top:1322px;width:285px;height:43px;border:1px solid #353535;border-radius:4px;background:#1e1e1e;overflow:hidden"></div>
<div class="t mono" style="left:2262px;top:1334.1px;font-size:10px;color:#d0d0d0;max-width:275px;overflow:hidden">window.ArsistBridge.__simulateIncoming({ hello: 'world' })</div>
<div class="a" style="left:2254px;top:1353px;width:220px;height:10px;border-radius:5px;background:#3d3d3d"></div>
<div class="t" style="left:2253px;top:1393.3px;font-size:12px;color:#4ac5ab;font-weight:bold;"><i>ア</i><i>セ</i><i>ッ</i><i>ト</i><i>（</i>GLB/GLTF<i>）</i><i>に</i><i>つ</i><i>い</i><i>て</i></div>
<div class="a" style="left:2267px;top:1426.7px;width:4px;height:4px;border-radius:2px;background:#7a7a7a"></div>
<div class="t hp" style="left:2281px;top:1422.4px;font-size:11px"><span style="color:#d6d6d6">Assets<i>に</i><i>置</i><i>い</i><i>た</i><i>だ</i><i>け</i><i>で</i><i>は</i><i>シ</i><i>ー</i><i>ン</i><i>に</i><i>出</i><i>ま</i><i>せ</i><i>ん</i><i>。</i></span></div>

<!-- BOTTOM PANEL -->
<div class="a" style="left:284px;top:1208px;width:1952px;height:34px;background:#2b2b2e"></div>
<div class="a" style="left:284px;top:1242px;width:1952px;height:1px;background:#383838"></div>
<div class="a" style="left:284px;top:1208px;width:114px;height:34px;background:#222"></div>
<div class="a" style="left:284px;top:1240px;width:114px;height:2px;background:#4ac5ab"></div>
<div class="t" style="left:323px;top:1217px;font-size:12.3px;color:#e0e0e0"><i>コ</i><i>ン</i><i>ソ</i><i>ー</i><i>ル</i></div>
<div class="t" style="left:437px;top:1217px;font-size:12.3px;color:#8e8e8e"><i>ア</i><i>セ</i><i>ッ</i><i>ト</i></div>
<div class="t" style="left:539px;top:1217px;font-size:12.3px;color:#8e8e8e"><i>ビ</i><i>ル</i><i>ド</i><i>ロ</i><i>グ</i></div>
<div class="a" style="left:284px;top:1243px;width:1952px;height:197px;background:#232323"></div>
<div class="t" style="left:296px;top:1261px;font-size:10.3px;color:#8e8e8e"><i>ア</i><i>プ</i><i>リ</i><i>内</i><i>ロ</i><i>グ</i></div>
<div class="t" style="left:2177px;top:1261px;font-size:11px;color:#bdbdbd"><i>ク</i><i>リ</i><i>ア</i></div>
<div class="t mono" style="left:293px;top:1298px;font-size:12px;color:#a6a6a6">[23:22:26] Arsist Engine <i>起</i><i>動</i><i>完</i><i>了</i></div>
<svg class="a" style="left:0;top:0" width="1" height="1"><g transform="matrix(0.7714 0 0 0.7429 15.74 55.39)" fill="none" stroke="#8e8e8e" stroke-width="1.6" stroke-linecap="round" stroke-linejoin="round"><path d="M5 12h14" vector-effect="non-scaling-stroke"/><path d="M12 5v14" vector-effect="non-scaling-stroke"/></g></svg>
<svg class="a" style="left:0;top:0" width="1" height="1"><g transform="matrix(0.7472 0 0 0.7765 53.96 54.92)" fill="none" stroke="#8e8e8e" stroke-width="1.5" stroke-linecap="round" stroke-linejoin="round"><path d="m6 14 1.5-2.9A2 2 0 0 1 9.24 10H20a2 2 0 0 1 1.94 2.5l-1.54 6a2 2 0 0 1-1.95 1.5H4a2 2 0 0 1-2-2V5a2 2 0 0 1 2-2h3.9a2 2 0 0 1 1.69.9l.81 1.2a2 2 0 0 0 1.67.9H18a2 2 0 0 1 2 2v2" vector-effect="non-scaling-stroke"/></g></svg>
<svg class="a" style="left:0;top:0" width="1" height="1"><g transform="matrix(0.7722 0 0 0.7389 91.93 55.43)" fill="none" stroke="#8e8e8e" stroke-width="1.5" stroke-linecap="round" stroke-linejoin="round"><path d="M15.2 3a2 2 0 0 1 1.4.6l3.8 3.8a2 2 0 0 1 .6 1.4V19a2 2 0 0 1-2 2H5a2 2 0 0 1-2-2V5a2 2 0 0 1 2-2z" vector-effect="non-scaling-stroke"/><path d="M17 21v-7a1 1 0 0 0-1-1H8a1 1 0 0 0-1 1v7" vector-effect="non-scaling-stroke"/><path d="M7 3v4a1 1 0 0 0 1 1h7" vector-effect="non-scaling-stroke"/></g></svg>
<svg class="a" style="left:0;top:0" width="1" height="1"><g transform="matrix(0.7000 0 0 0.6350 146.65 56.38)" fill="none" stroke="#8e8e8e" stroke-width="1.5" stroke-linecap="round" stroke-linejoin="round"><path d="M21 8a2 2 0 0 0-1-1.73l-7-4a2 2 0 0 0-2 0l-7 4A2 2 0 0 0 3 8v8a2 2 0 0 0 1 1.73l7 4a2 2 0 0 0 2 0l7-4A2 2 0 0 0 21 16Z" vector-effect="non-scaling-stroke"/><path d="m3.3 7 8.7 5 8.7-5" vector-effect="non-scaling-stroke"/><path d="M12 22V12" vector-effect="non-scaling-stroke"/></g></svg>
<svg class="a" style="left:0;top:0" width="1" height="1"><g transform="matrix(0.6889 0 0 0.6889 294.78 55.88)" fill="none" stroke="#8e8e8e" stroke-width="1.5" stroke-linecap="round" stroke-linejoin="round"><path d="M5 3h14a2 2 0 0 1 2 2v14a2 2 0 0 1-2 2H5a2 2 0 0 1-2-2V5a2 2 0 0 1 2-2z" vector-effect="non-scaling-stroke"/><path d="M3 9h18" vector-effect="non-scaling-stroke"/><path d="M9 21V9" vector-effect="non-scaling-stroke"/></g></svg>
<svg class="a" style="left:0;top:0" width="1" height="1"><g transform="matrix(0.6300 0 0 0.6500 433.34 56.30)" fill="none" stroke="#4ac5ab" stroke-width="1.6" stroke-linecap="round" stroke-linejoin="round"><path d="m16 18 6-6-6-6" vector-effect="non-scaling-stroke"/><path d="m8 6-6 6 6 6" vector-effect="non-scaling-stroke"/></g></svg>
<svg class="a" style="left:0;top:0" width="1" height="1"><g transform="matrix(0.5850 0 0 0.7250 1470.28 55.10)" fill="none" stroke="#8e8e8e" stroke-width="1.3" stroke-linecap="round" stroke-linejoin="round"><path d="m16 18 6-6-6-6" vector-effect="non-scaling-stroke"/><path d="m8 6-6 6 6 6" vector-effect="non-scaling-stroke"/></g></svg>
<svg class="a" style="left:0;top:0" width="1" height="1"><g transform="matrix(0.6959 0 0 0.7400 2418.55 55.17)" fill="none" stroke="#8e8e8e" stroke-width="1.5" stroke-linecap="round" stroke-linejoin="round"><path d="M12.22 2h-.44a2 2 0 0 0-2 2v.18a2 2 0 0 1-1 1.73l-.43.25a2 2 0 0 1-2 0l-.15-.08a2 2 0 0 0-2.73.73l-.22.38a2 2 0 0 0 .73 2.73l.15.1a2 2 0 0 1 1 1.72v.51a2 2 0 0 1-1 1.74l-.15.09a2 2 0 0 0-.73 2.73l.22.38a2 2 0 0 0 2.73.73l.15-.08a2 2 0 0 1 2 0l.43.25a2 2 0 0 1 1 1.73V20a2 2 0 0 0 2 2h.44a2 2 0 0 0 2-2v-.18a2 2 0 0 1 1-1.73l.43-.25a2 2 0 0 1 2 0l.15.08a2 2 0 0 0 2.73-.73l.22-.39a2 2 0 0 0-.73-2.73l-.15-.08a2 2 0 0 1-1-1.74v-.5a2 2 0 0 1 1-1.74l.15-.09a2 2 0 0 0 .73-2.73l-.22-.38a2 2 0 0 0-2.73-.73l-.15.08a2 2 0 0 1-2 0l-.43-.25a2 2 0 0 1-1-1.73V4a2 2 0 0 0-2-2z" vector-effect="non-scaling-stroke"/><path d="M15 12a3 3 0 1 1-6 0 3 3 0 0 1 6 0z" vector-effect="non-scaling-stroke"/></g></svg>
<svg class="a" style="left:0;top:0" width="1" height="1"><g transform="matrix(0.6833 0 0 0.6722 2468.80 56.03)" fill="none" stroke="#4ac5ab" stroke-width="1.7" stroke-linecap="round" stroke-linejoin="round"><path d="M21 15v4a2 2 0 0 1-2 2H5a2 2 0 0 1-2-2v-4" vector-effect="non-scaling-stroke"/><path d="m7 10 5 5 5-5" vector-effect="non-scaling-stroke"/><path d="M12 15V3" vector-effect="non-scaling-stroke"/></g></svg>
<svg class="a" style="left:0;top:0" width="1" height="1"><g transform="matrix(0.6667 0 0 0.6917 2079.95 99.50)" fill="none" stroke="#8e8e8e" stroke-width="1.3" stroke-linecap="round" stroke-linejoin="round"><path d="m9 18 6-6-6-6" vector-effect="non-scaling-stroke"/></g></svg>
<svg class="a" style="left:0;top:0" width="1" height="1"><g transform="matrix(0.7056 0 0 0.6889 2119.53 99.58)" fill="none" stroke="#8e8e8e" stroke-width="1.3" stroke-linecap="round" stroke-linejoin="round"><path d="M3 12a9 9 0 0 1 9-9 9.75 9.75 0 0 1 6.74 2.74L21 8" vector-effect="non-scaling-stroke"/><path d="M21 3v5h-5" vector-effect="non-scaling-stroke"/><path d="M21 12a9 9 0 0 1-9 9 9.75 9.75 0 0 1-6.74-2.74L3 16" vector-effect="non-scaling-stroke"/><path d="M8 16H3v5" vector-effect="non-scaling-stroke"/></g></svg>
<svg class="a" style="left:0;top:0" width="1" height="1"><g transform="matrix(0.6700 0 0 0.6700 2159.91 100.01)" fill="none" stroke="#8e8e8e" stroke-width="1.3" stroke-linecap="round" stroke-linejoin="round"><path d="M10 8h10a2 2 0 0 1 2 2v10a2 2 0 0 1-2 2H10a2 2 0 0 1-2-2V10a2 2 0 0 1 2-2z" vector-effect="non-scaling-stroke"/><path d="M4 16c-1.1 0-2-.9-2-2V4c0-1.1.9-2 2-2h10c1.1 0 2 .9 2 2" vector-effect="non-scaling-stroke"/></g></svg>
<svg class="a" style="left:0;top:0" width="1" height="1"><g transform="matrix(0.6350 0 0 0.6593 2200.38 99.99)" fill="none" stroke="#8e8e8e" stroke-width="1.3" stroke-linecap="round" stroke-linejoin="round"><path d="M2.062 12.348a1 1 0 0 1 0-.696 10.75 10.75 0 0 1 19.876 0 1 1 0 0 1 0 .696 10.75 10.75 0 0 1-19.876 0" vector-effect="non-scaling-stroke"/><path d="M15 12a3 3 0 1 1-6 0 3 3 0 0 1 6 0z" vector-effect="non-scaling-stroke"/></g></svg>
<svg class="a" style="left:0;top:0" width="1" height="1"><g transform="matrix(0.6188 0 0 0.6000 307.57 101.15)" fill="none" stroke="#e8913a" stroke-width="1.3" stroke-linecap="round" stroke-linejoin="round"><path d="M15 2H6a2 2 0 0 0-2 2v16a2 2 0 0 0 2 2h12a2 2 0 0 0 2-2V7Z" vector-effect="non-scaling-stroke"/><path d="M14 2v4a2 2 0 0 0 2 2h4" vector-effect="non-scaling-stroke"/><path d="m10 13-2 2 2 2" vector-effect="non-scaling-stroke"/><path d="m14 17 2-2-2-2" vector-effect="non-scaling-stroke"/></g></svg>
<svg class="a" style="left:0;top:0" width="1" height="1"><g transform="matrix(0.6050 0 0 0.5700 393.84 101.21)" fill="none" stroke="#4a90e2" stroke-width="1.3" stroke-linecap="round" stroke-linejoin="round"><path d="M12 22a1 1 0 0 1 0-20 10 9 0 0 1 10 9 5 5 0 0 1-5 5h-2.25a1.75 1.75 0 0 0-1.4 2.8l.3.4a1.75 1.75 0 0 1-1.4 2.8z" vector-effect="non-scaling-stroke"/><path d="M13.5 6.5h.01" vector-effect="non-scaling-stroke"/><path d="M17.5 10.5h.01" vector-effect="non-scaling-stroke"/><path d="M8.5 7.5h.01" vector-effect="non-scaling-stroke"/><path d="M6.5 12.5h.01" vector-effect="non-scaling-stroke"/></g></svg>
<svg class="a" style="left:0;top:0" width="1" height="1"><g transform="matrix(0.6100 0 0 0.5437 491.43 101.48)" fill="none" stroke="#e5c02a" stroke-width="1.3" stroke-linecap="round" stroke-linejoin="round"><path d="m18 16 4-4-4-4" vector-effect="non-scaling-stroke"/><path d="m6 8-4 4 4 4" vector-effect="non-scaling-stroke"/><path d="m14.5 4-5 16" vector-effect="non-scaling-stroke"/></g></svg>
<svg class="a" style="left:0;top:0" width="1" height="1"><g transform="matrix(0.5875 0 0 0.5900 15.90 141.97)" fill="none" stroke="#e8913a" stroke-width="1.3" stroke-linecap="round" stroke-linejoin="round"><path d="M15 2H6a2 2 0 0 0-2 2v16a2 2 0 0 0 2 2h12a2 2 0 0 0 2-2V7Z" vector-effect="non-scaling-stroke"/><path d="M14 2v4a2 2 0 0 0 2 2h4" vector-effect="non-scaling-stroke"/></g></svg>
<svg class="a" style="left:0;top:0" width="1" height="1"><g transform="matrix(0.5875 0 0 0.5900 15.90 173.97)" fill="none" stroke="#4a90e2" stroke-width="1.3" stroke-linecap="round" stroke-linejoin="round"><path d="M15 2H6a2 2 0 0 0-2 2v16a2 2 0 0 0 2 2h12a2 2 0 0 0 2-2V7Z" vector-effect="non-scaling-stroke"/><path d="M14 2v4a2 2 0 0 0 2 2h4" vector-effect="non-scaling-stroke"/></g></svg>
<svg class="a" style="left:0;top:0" width="1" height="1"><g transform="matrix(0.5875 0 0 0.5900 15.90 205.97)" fill="none" stroke="#e5c02a" stroke-width="1.3" stroke-linecap="round" stroke-linejoin="round"><path d="M15 2H6a2 2 0 0 0-2 2v16a2 2 0 0 0 2 2h12a2 2 0 0 0 2-2V7Z" vector-effect="non-scaling-stroke"/><path d="M14 2v4a2 2 0 0 0 2 2h4" vector-effect="non-scaling-stroke"/></g></svg>
<svg class="a" style="left:0;top:0" width="1" height="1"><g transform="matrix(0.5938 0 0 0.5429 299.47 1217.64)" fill="none" stroke="#d8d8d8" stroke-width="1.3" stroke-linecap="round" stroke-linejoin="round"><path d="m4 17 6-6-6-6" vector-effect="non-scaling-stroke"/><path d="M12 19h8" vector-effect="non-scaling-stroke"/></g></svg>
<svg class="a" style="left:0;top:0" width="1" height="1"><g transform="matrix(0.6333 0 0 0.5550 413.40 1217.29)" fill="none" stroke="#8a8a8a" stroke-width="1.2" stroke-linecap="round" stroke-linejoin="round"><path d="m7.5 4.27 9 5.15" vector-effect="non-scaling-stroke"/><path d="M21 8a2 2 0 0 0-1-1.73l-7-4a2 2 0 0 0-2 0l-7 4A2 2 0 0 0 3 8v8a2 2 0 0 0 1 1.73l7 4a2 2 0 0 0 2 0l7-4A2 2 0 0 0 21 16Z" vector-effect="non-scaling-stroke"/><path d="m3.3 7 8.7 5 8.7-5" vector-effect="non-scaling-stroke"/><path d="M12 22V12" vector-effect="non-scaling-stroke"/></g></svg>
<svg class="a" style="left:0;top:0" width="1" height="1"><g transform="matrix(0.6250 0 0 0.5950 515.20 1216.91)" fill="none" stroke="#8a8a8a" stroke-width="1.2" stroke-linecap="round" stroke-linejoin="round"><path d="M15 2H6a2 2 0 0 0-2 2v16a2 2 0 0 0 2 2h12a2 2 0 0 0 2-2V7Z" vector-effect="non-scaling-stroke"/><path d="M14 2v4a2 2 0 0 0 2 2h4" vector-effect="non-scaling-stroke"/><path d="M10 9H8" vector-effect="non-scaling-stroke"/><path d="M16 13H8" vector-effect="non-scaling-stroke"/><path d="M16 17H8" vector-effect="non-scaling-stroke"/></g></svg>
<svg class="a" style="left:0;top:0" width="1" height="1"><g transform="matrix(0.4550 0 0 0.5259 1272.44 137.59)" fill="none" stroke="#8a8a8a" stroke-width="1.1" stroke-linecap="round" stroke-linejoin="round"><path d="M2.062 12.348a1 1 0 0 1 0-.696 10.75 10.75 0 0 1 19.876 0 1 1 0 0 1 0 .696 10.75 10.75 0 0 1-19.876 0" vector-effect="non-scaling-stroke"/><path d="M15 12a3 3 0 1 1-6 0 3 3 0 0 1 6 0z" vector-effect="non-scaling-stroke"/></g></svg>
<svg class="a" style="left:0;top:0" width="1" height="1"><g transform="matrix(0.4400 0 0 0.4500 7.62 1419.50)" fill="none" stroke="#8a8a8a" stroke-width="1.0" stroke-linecap="round" stroke-linejoin="round"><path d="M22 12a10 10 0 1 1-20 0 10 10 0 0 1 20 0z" vector-effect="non-scaling-stroke"/><path d="M9.09 9a3 3 0 0 1 5.83 1c0 2-3 3-3 3" vector-effect="non-scaling-stroke"/><path d="M12 17h.01" vector-effect="non-scaling-stroke"/></g></svg>
<svg class="a" style="left:0;top:0" width="1" height="1"><g transform="matrix(0.6167 0 0 0.6500 2528.55 12.05)" fill="none" stroke="#8a8a8a" stroke-width="1.3" stroke-linecap="round" stroke-linejoin="round"><path d="M18 6 6 18" vector-effect="non-scaling-stroke"/><path d="m6 6 12 12" vector-effect="non-scaling-stroke"/></g></svg>
</body>
</html>
